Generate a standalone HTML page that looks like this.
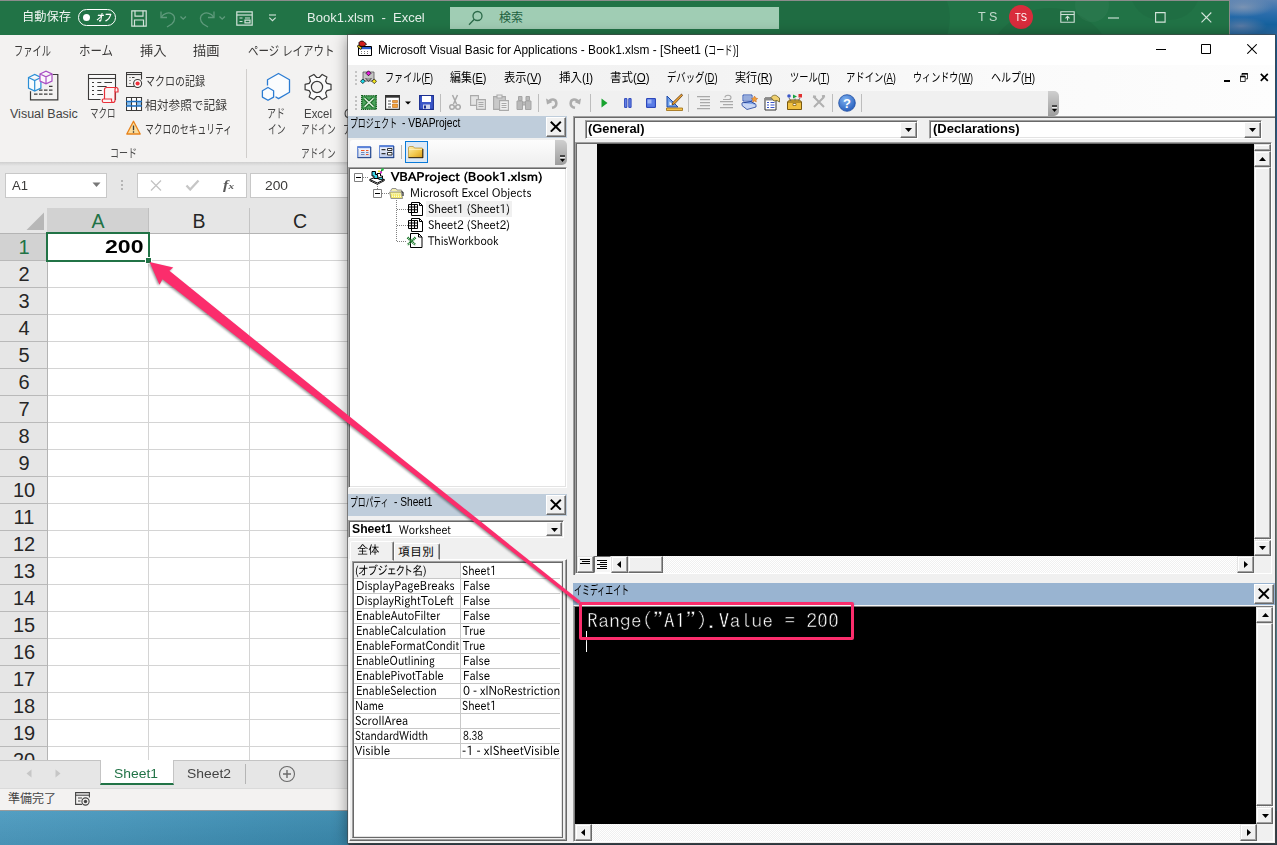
<!DOCTYPE html>
<html lang="ja">
<head>
<meta charset="utf-8">
<title>Excel VBA</title>
<style>
*{box-sizing:border-box;margin:0;padding:0}
html,body{width:1277px;height:845px;overflow:hidden}
body{position:relative;background:linear-gradient(180deg,#1a64a0 0,#2a6a9e 15%,#8f9690 35%,#bcad95 46%,#9fa79a 60%,#4f8fa8 80%,#3b5560 100%);font-family:"Liberation Sans","Noto Sans CJK JP",sans-serif;color:#222}
.abs{position:absolute}
.t{position:absolute;white-space:nowrap;line-height:1}
/* wallpaper */
#wpTop{left:1229px;top:0;width:48px;height:35px;background:radial-gradient(ellipse 26px 9px at 12px 26px,#5a7ba6 0,rgba(90,123,166,0) 100%),radial-gradient(ellipse 30px 10px at 14px 7px,#7a93b3 0,rgba(122,147,179,0) 100%),linear-gradient(180deg,#5b83b3 0,#2a6cab 40%,#15629f 70%,#2a6aa3 100%)}
#wpBot{left:0;top:811px;width:1277px;height:34px;background:linear-gradient(180deg,rgba(255,255,255,.04),rgba(0,0,0,.06)),linear-gradient(90deg,#4d9bc0 0,#4796bb 120px,#3f8fb4 250px,#3b8aae 348px,#3a4f5c 349px,#3a4a55 100%)}
/* excel */
#xl{left:0;top:0;width:1230px;height:811px;background:#fff;overflow:hidden;border-right:1px solid #8c8c8c;border-bottom:1px solid #9a9a9a}
#xlTitle{left:0;top:0;width:1229px;height:35px;background:#217346}
#xlTitle .t{color:#fff}
#xlTabs{left:0;top:35px;width:1229px;height:30px;background:#f3f2f1}
#xlRibbon{left:0;top:65px;width:1229px;height:97px;background:#f3f2f1}
#xlFx{left:0;top:162px;width:1229px;height:46px;background:#e6e6e6}
.rt{font-size:13px;color:#3b3a39;top:43px}
.rl{font-size:12px;color:#444}
.cell-h{position:absolute;font-size:18px;color:#262626;text-align:center;line-height:1}

/* vba */
#vba{left:0;top:0;width:0;height:0;font-family:"Liberation Sans","IPAPGothic","Noto Sans CJK JP",sans-serif}
.ui{font-family:"Liberation Sans","Noto Sans CJK JP",sans-serif}
.gt{font-family:"IPAPGothic","IPAGothic","Noto Sans CJK JP",sans-serif}
.sunk{position:absolute;border:1px solid;border-color:#a0a0a0 #fff #fff #a0a0a0;box-shadow:inset 1px 1px 0 #696969,inset -1px -1px 0 #e3e3e3}
.btn{position:absolute;background:#f0f0f0;border:1px solid;border-color:#fff #696969 #696969 #fff;box-shadow:inset -1px -1px 0 #a0a0a0,inset 1px 1px 0 #f0f0f0}
.sb{position:absolute;background:#f0f0f0;border:1px solid;border-color:#e3e3e3 #696969 #696969 #e3e3e3;box-shadow:inset -1px -1px 0 #a0a0a0,inset 1px 1px 0 #fff}
.track{position:absolute;background:#f8f8f8;background-image:repeating-conic-gradient(#fff 0 25%,#f0f0f0 0 50%);background-size:2px 2px}
.mn{color:#000}
u{text-decoration:underline;text-underline-offset:1px}
</style>
</head>
<body>
<div class="abs" id="wpTop"></div>
<div class="abs" id="wpBot"></div>

<!-- ================= EXCEL ================= -->
<div class="abs" id="xl">
  <div class="abs" id="xlTitle">
    <div class="abs" style="left:0;top:0;width:1229px;height:35px;overflow:hidden">
      <div class="abs" style="left:780px;top:-30px;width:170px;height:110px;border-radius:0 60px 80px 0;background:rgba(0,0,0,.055)"></div>
      <div class="abs" style="left:985px;top:8px;width:130px;height:90px;border-radius:65px 65px 0 0;background:rgba(0,0,0,.05)"></div>
      <div class="abs" style="left:1075px;top:-12px;width:34px;height:34px;border-radius:17px;background:rgba(255,255,255,.035)"></div>
      <div class="abs" style="left:1130px;top:-40px;width:70px;height:60px;border-radius:35px;background:rgba(0,0,0,.04)"></div>
    </div>
    <div class="t" style="left:22px;top:11.2px;font-size:12.5px;transform:scaleX(0.980);transform-origin:0 50%;color:#fff;opacity:.93">自動保存</div>
    <div class="abs" style="left:78px;top:9px;width:38px;height:17px;border:1.3px solid #fff;border-radius:9px"></div>
    <div class="abs" style="left:83px;top:13.500px;width:7px;height:7px;border-radius:4px;background:#fff"></div>
    <div class="t" style="left:96px;top:12.5px;font-size:10px;transform:scaleX(0.750);transform-origin:0 50%;color:#fff;font-style:italic;font-weight:bold">オフ</div>
    <svg class="abs" style="left:131px;top:10px" width="16" height="17" viewBox="0 0 16 17" fill="none" stroke="#d3e3da" stroke-width="1.2"><path d="M.8.800h14.400v15.400H.8z"/><path d="M4 .8v5.400h8V.8"/><path d="M3.500 16.200V10h9v6.200"/></svg>
    <svg class="abs" style="left:159px;top:9px" width="30" height="19" viewBox="0 0 30 19" fill="none" stroke="#5f9a7c" stroke-width="1.300"><path d="M2 2.500v6h6"/><path d="M2.300 8.300C4.500 4.300 9.500 2.800 13 5c3.600 2.300 3.300 6.800-.2 10L8 18"/><path d="M21.500 7.500l2.700 2.700 2.700-2.700"/></svg>
    <svg class="abs" style="left:198px;top:9px" width="30" height="19" viewBox="0 0 30 19" fill="none" stroke="#5f9a7c" stroke-width="1.300"><path d="M16 2.500v6h-6"/><path d="M15.700 8.300C13.500 4.300 8.500 2.800 5 5c-3.600 2.300-3.300 6.800.2 10L10 18"/><path d="M21.500 7.500l2.700 2.700 2.700-2.700"/></svg>
    <svg class="abs" style="left:236px;top:11px" width="17" height="15" viewBox="0 0 17 15" fill="none" stroke="#d3e3da" stroke-width="1.2"><path d="M.8.800h15.400v13.400H.8z"/><path d="M.8 4h15.400"/><path d="M3.500 7h3M9 7h5M3.500 10.500h3M9 9.200h5v2.600H9z"/></svg>
    <svg class="abs" style="left:267px;top:13px" width="11" height="9" viewBox="0 0 11 9" fill="none" stroke="#d3e3da" stroke-width="1.100"><path d="M2 2h7"/><path d="M2.300 4.700l3.200 3 3.200-3"/></svg>
    <div class="t" style="left:307px;top:11.0px;font-size:13px;color:#fff;opacity:.88">Book1.xlsm&nbsp; -&nbsp; Excel</div>
    <div class="abs" style="left:450px;top:7px;width:329px;height:22px;background:#a0cdb4"></div>
    <svg class="abs" style="left:468px;top:10px" width="16" height="16" viewBox="0 0 16 16" fill="none" stroke="#2b6a49" stroke-width="1.300"><circle cx="9.500" cy="6" r="4.500"/><path d="M6.300 9.300L1 14.800"/></svg>
    <div class="t" style="left:499px;top:11.5px;font-size:12px;color:#21613f">検索</div>
    <div class="t" style="left:978px;top:11.2px;font-size:12.5px;color:#fff;opacity:.72">T S</div>
    <div class="abs" style="left:1009px;top:5px;width:24px;height:24px;border-radius:12px;background:#d92c3c"></div>
    <div class="t" style="left:1015px;top:12.5px;font-size:10px;transform:scaleX(0.939);transform-origin:0 50%;color:#fff">TS</div>
    <svg class="abs" style="left:1060px;top:11px" width="15" height="12" viewBox="0 0 15 12" fill="none" stroke="#cfe0d7" stroke-width="1.100"><path d="M.8.800h13.400v10.400H.8z"/><path d="M.8 3.500h13.400"/><path d="M7.500 9.500V5.500M5.500 7.300l2-2 2 2"/></svg>
    <svg class="abs" style="left:1108px;top:17px" width="12" height="2" viewBox="0 0 12 2"><path d="M0 1h11" stroke="#d5e5dc" stroke-width="1.100"/></svg>
    <svg class="abs" style="left:1155px;top:12px" width="11" height="11" viewBox="0 0 11 11" fill="none" stroke="#d5e5dc" stroke-width="1.100"><path d="M.6.600h9.500v9.500H.6z"/></svg>
    <svg class="abs" style="left:1201px;top:12px" width="11" height="11" viewBox="0 0 11 11" fill="none" stroke="#d5e5dc" stroke-width="1.100"><path d="M.5.500l9.800 9.800M10.300.5L.5 10.300"/></svg>
  </div>
  <div class="abs" style="left:0;top:0;width:1230px;height:1px;background:#8c8c8c"></div>
  <div class="abs" id="xlTabs"></div>
  <div class="t" style="left:14px;top:43.5px;font-size:13px;transform:scaleX(0.711);transform-origin:0 50%;color:#3b3a39">ファイル</div>
  <div class="t" style="left:79px;top:43.5px;font-size:13px;transform:scaleX(0.880);transform-origin:0 50%;color:#3b3a39">ホーム</div>
  <div class="t" style="left:139.5px;top:43.5px;font-size:13px;transform:scaleX(1.019);transform-origin:0 50%;color:#3b3a39">挿入</div>
  <div class="t" style="left:192.5px;top:43.5px;font-size:13px;transform:scaleX(1.019);transform-origin:0 50%;color:#3b3a39">描画</div>
  <div class="t" style="left:247.5px;top:43.5px;font-size:13px;transform:scaleX(0.806);transform-origin:0 50%;color:#3b3a39">ページ レイアウト</div>
  <div class="abs" id="xlRibbon"></div>
  <!-- Visual Basic icon -->
  <svg class="abs" style="left:27px;top:70px" width="33" height="33" viewBox="0 0 33 33" fill="none" stroke-width="1.200">
    <path d="M25.500 4.500h5.300v25.300H3.500v-8.500" stroke="#3b3a39"/><path d="M22 16.300h5M12 20.200h15M7 24.100h20" stroke="#3b3a39" stroke-dasharray="3.500 1.500"/>
    <path d="M1.500 7.500l6.200-3 6.200 3v10.500l-6.200 3-6.200-3z M1.500 7.500l6.200 3 6.200-3M7.700 10.500v10.500" stroke="#2b8fd6" fill="#f8fbfe"/>
    <path d="M13 4l6-2.800 6 2.800v7l-6 2.800-6-2.800z M13 4l6 2.800 6-2.800M19 6.800v7" stroke="#a94fc4" fill="#fbf6fc"/>
  </svg>
  <div class="t" style="left:10px;top:108.3px;font-size:12.5px;color:#444">Visual Basic</div>
  <!-- Macro icon -->
  <svg class="abs" style="left:87px;top:73px" width="33" height="31" viewBox="0 0 33 31" fill="none" stroke-width="1.100">
    <path d="M1.500 1.500h27v25h-27z" stroke="#3b3a39" fill="#fafafa"/><path d="M1.500 5.500h27" stroke="#3b3a39"/>
    <path d="M5 9.500h2M10.300 9.500h4M17.400 9.500h7.600M5 13.500h2M10.300 13.500h9.300M5 17.500h2M10.300 17.500h4.400M5 21.500h2M10.300 21.500h5.700" stroke="#3b3a39"/>
    <path d="M14.500 30.300h-1v-5h4V16.500c0-1.200.8-2 2-2h10c1.300 0 2 .8 2 2v2.500h-3.500v8.500c0 1.500-1 2.800-2.500 2.800z" fill="#f3f2f1" stroke="none"/>
    <path d="M17.500 26V16.500c0-1.200.8-2 2-2h9.700c1.200 0 1.800.8 1.800 2v2.500h-3v8.300c0 1.300-1 2.200-2.200 2.200h-9c-1 0-1.500-.6-1.500-1.500v-1c0-.6.400-1 1-1h8.200v1.500c0 1.200.6 2 1.500 2" stroke="#e8303a" fill="#fbf4f4" stroke-width="1.200"/><path d="M28 19v-2.500c0-1.200.5-2 1.500-2" stroke="#e8303a" stroke-width="1.200"/>
  </svg>
  <div class="t" style="left:89.5px;top:108.3px;font-size:12.5px;transform:scaleX(0.680);transform-origin:0 50%;color:#444">マクロ</div>
  <!-- record macro -->
  <svg class="abs" style="left:126px;top:72px" width="17" height="16" viewBox="0 0 17 16" fill="none" stroke-width="1.100">
    <path d="M8.500 14.500h-8v-14h15v7" stroke="#3b3a39"/><path d="M.5 2.500h15" stroke="#3b3a39"/><path d="M3.500 5.500h1M6 5.500h2.500M3.500 8.500h1M3.500 11.500h1" stroke="#3b3a39"/>
    <circle cx="11.600" cy="11.500" r="4" fill="#fdfdfd" stroke="#3b3a39"/><circle cx="11.600" cy="11.500" r="2.100" fill="#ee2f3a"/>
  </svg>
  <div class="t" style="left:145px;top:75.8px;font-size:12.5px;transform:scaleX(0.800);transform-origin:0 50%;color:#3b3a39">マクロの記録</div>
  <!-- relative ref -->
  <svg class="abs" style="left:126px;top:97px" width="17" height="15" viewBox="0 0 17 15" fill="none" stroke-width="1.100">
    <path d="M.5.500h15v13h-15z" fill="#fff"/><rect x=".5" y="4.500" width="15" height="4.500" fill="#8fc3ef"/><rect x="6" y="5" width="4.500" height="3.500" fill="#fff"/>
    <path d="M.5.500h15v13h-15z M5.500.5v13M10.500.5v13" stroke="#3b3a39"/><path d="M0 4.500h16M0 9h16" stroke="#1e6fc0" stroke-width="1.300"/>
  </svg>
  <div class="t" style="left:145px;top:99.8px;font-size:12.5px;transform:scaleX(0.937);transform-origin:0 50%;color:#3b3a39">相対参照で記録</div>
  <!-- warning -->
  <svg class="abs" style="left:126px;top:120px" width="16" height="15" viewBox="0 0 16 15"><path d="M7.500 1.300l6.700 12.700H.8z" fill="#fbdc9c" stroke="#e8821a" stroke-width="1.300" stroke-linejoin="round"/><path d="M7.500 5.500v4.700M7.500 11.300v1.500" stroke="#3b3a39" stroke-width="1.300"/></svg>
  <div class="t" style="left:145px;top:124.2px;font-size:12.5px;transform:scaleX(0.700);transform-origin:0 50%;color:#3b3a39">マクロのセキュリティ</div>
  <div class="t" style="left:109.5px;top:148.3px;font-size:12px;transform:scaleX(0.750);transform-origin:0 50%;color:#4a4a4a">コード</div>
  <div class="abs" style="left:246px;top:69px;width:1px;height:89px;background:#d0cecc"></div>
  <!-- add-in hexagons -->
  <svg class="abs" style="left:260px;top:71px" width="32" height="32" viewBox="0 0 32 32" fill="none" stroke="#2b7cd3" stroke-width="1.300" stroke-linejoin="round">
    <path d="M7.500 14.500V8.800l11-6.300 11 6.300v12.500l-11 6.300-3-1.800" fill="#fafcfe"/>
    <path d="M8 16.500l5.600 3.200v6.400L8 29.300l-5.600-3.200v-6.400z" fill="#fafcfe"/>
  </svg>
  <div class="t" style="left:267px;top:108.3px;font-size:12.5px;transform:scaleX(0.720);transform-origin:0 50%;color:#444">アド</div>
  <div class="t" style="left:267.5px;top:124.2px;font-size:12.5px;transform:scaleX(0.700);transform-origin:0 50%;color:#444">イン</div>
  <!-- gear -->
  <svg class="abs" style="left:301px;top:71px" width="32" height="32" viewBox="0 0 32 32" fill="none" stroke="#3b3a39" stroke-width="1.200" stroke-linejoin="round">
    <g transform="rotate(90 16 16)"><path d="M13.300 2h5.400l.9 4.100 2.300 1.300 4-1.300 2.700 4.700-3.100 2.800v2.700l3.100 2.800-2.700 4.700-4-1.300-2.300 1.300-.9 4.100h-5.400l-.9-4.100-2.300-1.300-4 1.300-2.700-4.700 3.100-2.800v-2.700L3.400 10.800l2.700-4.700 4 1.300 2.300-1.300z" fill="#fbfbfb"/></g>
    <circle cx="16" cy="16" r="5.600" fill="#f3f2f1"/>
  </svg>
  <div class="t" style="left:304px;top:108.3px;font-size:12.5px;transform:scaleX(0.916);transform-origin:0 50%;color:#444">Excel</div>
  <div class="t" style="left:300.5px;top:124.2px;font-size:12.5px;transform:scaleX(0.690);transform-origin:0 50%;color:#444">アドイン</div>
  <div class="t" style="left:300.5px;top:148.3px;font-size:12px;transform:scaleX(0.719);transform-origin:0 50%;color:#4a4a4a">アドイン</div>
  <div class="t" style="left:344px;top:108.3px;font-size:12.5px;transform:scaleX(0.886);transform-origin:0 50%;color:#444">C</div>
  <div class="t" style="left:343px;top:124.2px;font-size:12.5px;transform:scaleX(0.719);transform-origin:0 50%;color:#444">ア</div>
  <div class="abs" style="left:0;top:162px;width:1229px;height:4px;background:linear-gradient(180deg,#d4d4d4,#e6e6e6)"></div>
  <div class="abs" id="xlFx"></div>
  <div class="abs" style="left:0;top:162px;width:1229px;height:4px;background:linear-gradient(180deg,#cfcfcf,#e6e6e6)"></div>
  <div class="abs" style="left:5px;top:173px;width:102px;height:25px;background:#fff;border:1px solid #c8c8c8"></div>
  <div class="t" style="left:12px;top:179.2px;font-size:13.5px;transform:scaleX(0.969);transform-origin:0 50%;color:#3b3a39">A1</div>
  <svg class="abs" style="left:92px;top:182px" width="9" height="6" viewBox="0 0 9 6"><path d="M.5.500h8L4.500 5z" fill="#777"/></svg>
  <div class="abs" style="left:121px;top:180px;width:2px;height:2px;background:#b5b5b5;box-shadow:0 4px 0 #b5b5b5,0 8px 0 #b5b5b5"></div>
  <div class="abs" style="left:137px;top:173px;width:110px;height:25px;background:#fff;border:1px solid #c8c8c8"></div>
  <svg class="abs" style="left:150px;top:180px" width="12" height="11" viewBox="0 0 12 11"><path d="M1 .5l10 10M11 .5l-10 10" stroke="#c3c3c3" stroke-width="1.300"/></svg>
  <svg class="abs" style="left:185px;top:179px" width="15" height="12" viewBox="0 0 15 12"><path d="M1.500 6.500l3.700 4L13.500 1.500" stroke="#c6c6c6" stroke-width="2.300" fill="none"/></svg>
  <div class="t" style="left:222.5px;top:178.3px;font-size:13px;transform:scaleX(1.244);transform-origin:0 50%;color:#5a5a5a;font-family:'Liberation Serif',serif;font-style:italic;font-weight:bold">f<span style="font-size:9px">x</span></div>
  <div class="abs" style="left:250px;top:173px;width:985px;height:25px;background:#fff;border:1px solid #c8c8c8"></div>
  <div class="t" style="left:265px;top:179.2px;font-size:13.5px;transform:scaleX(1.021);transform-origin:0 50%;color:#3b3a39">200</div>
  <!-- grid -->
  <div class="abs" style="left:0;top:208px;width:1229px;height:552px;background:#fff"></div>
  <div class="abs" style="left:47px;top:233px;width:1182px;height:527px;background-image:repeating-linear-gradient(90deg,#d4d4d4 0,#d4d4d4 1px,transparent 1px,transparent 101px),repeating-linear-gradient(180deg,#d4d4d4 0,#d4d4d4 1px,transparent 1px,transparent 27px)"></div>
  <div class="abs" style="left:0;top:208px;width:1229px;height:26px;background:#e6e6e6"></div>
  <div class="abs" style="left:47px;top:208px;width:102px;height:25px;background:#d2d2d2"></div>
  <div class="abs" style="left:148px;top:208px;width:1px;height:25px;background:#c0c0c0"></div>
  <div class="abs" style="left:249px;top:208px;width:1px;height:25px;background:#c4c4c4"></div>
  <div class="abs" style="left:0;top:233px;width:1229px;height:1px;background:#b4b4b4"></div>
  <svg class="abs" style="left:26px;top:212px" width="19" height="19" viewBox="0 0 19 19"><path d="M18 .5V18H.5z" fill="#b7b7b7"/></svg>
  <div class="abs" style="left:0;top:234px;width:47px;height:526px;background:#e6e6e6"></div>
  <div class="abs" style="left:0;top:234px;width:47px;height:26px;background:#d2d2d2"></div>
  <div class="abs" style="left:47px;top:233px;width:1px;height:527px;background:#b4b4b4"></div>
  <div class="abs" style="left:0;top:260px;width:47px;height:1px;background:#b9b9b9"></div>
  <div class="abs" style="left:0;top:287px;width:47px;height:1px;background:#b9b9b9"></div>
  <div class="abs" style="left:0;top:314px;width:47px;height:1px;background:#b9b9b9"></div>
  <div class="abs" style="left:0;top:341px;width:47px;height:1px;background:#b9b9b9"></div>
  <div class="abs" style="left:0;top:368px;width:47px;height:1px;background:#b9b9b9"></div>
  <div class="abs" style="left:0;top:395px;width:47px;height:1px;background:#b9b9b9"></div>
  <div class="abs" style="left:0;top:422px;width:47px;height:1px;background:#b9b9b9"></div>
  <div class="abs" style="left:0;top:449px;width:47px;height:1px;background:#b9b9b9"></div>
  <div class="abs" style="left:0;top:476px;width:47px;height:1px;background:#b9b9b9"></div>
  <div class="abs" style="left:0;top:503px;width:47px;height:1px;background:#b9b9b9"></div>
  <div class="abs" style="left:0;top:530px;width:47px;height:1px;background:#b9b9b9"></div>
  <div class="abs" style="left:0;top:557px;width:47px;height:1px;background:#b9b9b9"></div>
  <div class="abs" style="left:0;top:584px;width:47px;height:1px;background:#b9b9b9"></div>
  <div class="abs" style="left:0;top:611px;width:47px;height:1px;background:#b9b9b9"></div>
  <div class="abs" style="left:0;top:638px;width:47px;height:1px;background:#b9b9b9"></div>
  <div class="abs" style="left:0;top:665px;width:47px;height:1px;background:#b9b9b9"></div>
  <div class="abs" style="left:0;top:692px;width:47px;height:1px;background:#b9b9b9"></div>
  <div class="abs" style="left:0;top:719px;width:47px;height:1px;background:#b9b9b9"></div>
  <div class="abs" style="left:0;top:746px;width:47px;height:1px;background:#b9b9b9"></div>
  <div class="t" style="left:78px;top:211.700px;width:40px;text-align:center;font-size:19.500px;color:#217346">A</div>
  <div class="t" style="left:179px;top:211.700px;width:40px;text-align:center;font-size:19.500px;color:#262626">B</div>
  <div class="t" style="left:280px;top:211.700px;width:40px;text-align:center;font-size:19.500px;color:#262626">C</div>
  <div class="t" style="left:4px;top:237px;width:40px;text-align:center;font-size:20px;color:#217346">1</div>
  <div class="t" style="left:4px;top:264px;width:40px;text-align:center;font-size:20px;color:#262626">2</div>
  <div class="t" style="left:4px;top:291px;width:40px;text-align:center;font-size:20px;color:#262626">3</div>
  <div class="t" style="left:4px;top:318px;width:40px;text-align:center;font-size:20px;color:#262626">4</div>
  <div class="t" style="left:4px;top:345px;width:40px;text-align:center;font-size:20px;color:#262626">5</div>
  <div class="t" style="left:4px;top:372px;width:40px;text-align:center;font-size:20px;color:#262626">6</div>
  <div class="t" style="left:4px;top:399px;width:40px;text-align:center;font-size:20px;color:#262626">7</div>
  <div class="t" style="left:4px;top:426px;width:40px;text-align:center;font-size:20px;color:#262626">8</div>
  <div class="t" style="left:4px;top:453px;width:40px;text-align:center;font-size:20px;color:#262626">9</div>
  <div class="t" style="left:4px;top:480px;width:40px;text-align:center;font-size:20px;color:#262626">10</div>
  <div class="t" style="left:4px;top:507px;width:40px;text-align:center;font-size:20px;color:#262626">11</div>
  <div class="t" style="left:4px;top:534px;width:40px;text-align:center;font-size:20px;color:#262626">12</div>
  <div class="t" style="left:4px;top:561px;width:40px;text-align:center;font-size:20px;color:#262626">13</div>
  <div class="t" style="left:4px;top:588px;width:40px;text-align:center;font-size:20px;color:#262626">14</div>
  <div class="t" style="left:4px;top:615px;width:40px;text-align:center;font-size:20px;color:#262626">15</div>
  <div class="t" style="left:4px;top:642px;width:40px;text-align:center;font-size:20px;color:#262626">16</div>
  <div class="t" style="left:4px;top:669px;width:40px;text-align:center;font-size:20px;color:#262626">17</div>
  <div class="t" style="left:4px;top:696px;width:40px;text-align:center;font-size:20px;color:#262626">18</div>
  <div class="t" style="left:4px;top:723px;width:40px;text-align:center;font-size:20px;color:#262626">19</div>
  <div class="t" style="left:4px;top:750px;width:40px;text-align:center;font-size:20px;color:#262626">20</div>
  <div class="abs" style="left:46px;top:232px;width:104px;height:30px;border:2px solid #217346;background:#fff"></div>
  <div class="abs" style="left:145px;top:257px;width:7px;height:7px;background:#217346;border:1px solid #fff"></div>
  <div class="t" style="left:105px;top:238.0px;font-size:18px;transform:scaleX(1.281);transform-origin:0 50%;color:#000;font-weight:bold">200</div>
  <div class="abs" style="left:0;top:760px;width:1229px;height:28px;background:#e6e6e6;border-top:1px solid #c4c4c4"></div>
  <div class="abs" style="left:100px;top:760px;width:74px;height:25px;background:#fff;border-left:1px solid #c4c4c4;border-right:1px solid #c4c4c4;border-bottom:2px solid #217346"></div>
  <div class="t" style="left:114px;top:767.0px;font-size:13px;transform:scaleX(1.068);transform-origin:0 50%;color:#217346">Sheet1</div>
  <div class="t" style="left:187px;top:767.0px;font-size:13px;transform:scaleX(1.068);transform-origin:0 50%;color:#444">Sheet2</div>
  <div class="abs" style="left:245px;top:764px;width:1px;height:20px;background:#b5b5b5"></div>
  <svg class="abs" style="left:278px;top:765px" width="18" height="18" viewBox="0 0 18 18" fill="none" stroke="#6a6a6a" stroke-width="1.100"><circle cx="9" cy="9" r="7.500"/><path d="M9 5v8M5 9h8" stroke-width="1.400"/></svg>
  <svg class="abs" style="left:26px;top:769px" width="6" height="9" viewBox="0 0 6 9"><path d="M5.500.5v8L.5 4.500z" fill="#c6c6c6"/></svg>
  <svg class="abs" style="left:55px;top:769px" width="6" height="9" viewBox="0 0 6 9"><path d="M.5.500v8L5.500 4.500z" fill="#c6c6c6"/></svg>
  <div class="abs" style="left:0;top:788px;width:1229px;height:23px;background:#f3f2f1;border-top:1px solid #dadada"></div>
  <div class="t" style="left:8px;top:792.5px;font-size:12px;color:#444">準備完了</div>
  <svg class="abs" style="left:75px;top:792px" width="16" height="14" viewBox="0 0 16 14" fill="none" stroke="#444" stroke-width="1.100"><path d="M7 12.400H.6V.6h13.800v5"/><path d="M.6 3.200h13.800"/><path d="M3 6h4M3 9h2.500"/><circle cx="10.500" cy="9.500" r="3.600" fill="#f3f2f1"/><circle cx="10.500" cy="9.500" r="1.700" fill="#444" stroke="none"/></svg>
</div>

<!-- ================= VBA ================= -->
<div class="abs" id="vba">
  <div class="abs" style="left:348px;top:35px;width:927px;height:808px;background:#f0f0f0;box-shadow:0 0 0 1px rgba(70,70,70,.6),0 2px 14px rgba(0,0,0,.45)"></div>
  <div class="abs" style="left:348px;top:35px;width:927px;height:30px;background:#fff"></div>
  <div class="abs" style="left:348px;top:65px;width:927px;height:51px;background:linear-gradient(90deg,#f0f0f0 0,#f3f3f3 35%,#fafafa 70%,#fdfdfd 100%)"></div>
  <!-- title icon -->
  <svg class="abs" style="left:356px;top:40px" width="17" height="17" viewBox="0 0 17 17">
    <path d="M2.500 6.500h13v9h-13z" fill="#fff" stroke="#000" stroke-width="1"/><path d="M3 7h12v2.200H3z" fill="#2a5fd0"/>
    <path d="M5 11.500h1M8 11.500h1M11 11.500h1M5 13.500h1M8 13.500h1M11 13.500h1" stroke="#777" stroke-width="1"/>
    <path d="M3 2.500c1.500-2 4.500-2 6 .3l1.500 1.200-1.700 1.800C7 6.800 4 6.500 3 5z" fill="#d21f1f" stroke="#000" stroke-width=".8"/>
    <path d="M2 5l4 2.500-1 2-3.500-2.500z" fill="#f0d020" stroke="#000" stroke-width=".7"/>
  </svg>
  <div class="t" style="left:377.5px;top:43.8px;font-size:12.5px;transform:scaleX(0.949);transform-origin:0 50%;color:#000;font-family:'Liberation Sans',sans-serif">Microsoft Visual Basic for Applications - Book1.xlsm - &#91;Sheet1 (</div>
  <div class="t" style="left:708px;top:43.8px;font-size:12.5px;transform:scaleX(0.653);transform-origin:0 50%;color:#000;font-family:'Noto Sans CJK JP',sans-serif">コード</div>
  <div class="t" style="left:733px;top:43.8px;font-size:12.5px;transform:scaleX(0.720);transform-origin:0 50%;color:#000;font-family:'Liberation Sans',sans-serif">)&#93;</div>
  <div class="abs" style="left:1156px;top:49px;width:10px;height:1px;background:#000"></div>
  <svg class="abs" style="left:1201px;top:44px" width="10" height="10" viewBox="0 0 10 10" fill="none" stroke="#000" stroke-width="1"><path d="M.5.500h9v9h-9z"/></svg>
  <svg class="abs" style="left:1247px;top:44px" width="10" height="10" viewBox="0 0 10 10" fill="none" stroke="#000" stroke-width="1.050"><path d="M.3.300l9.400 9.400M9.700.3L.3 9.700"/></svg>

  <!-- menu grip + icon -->
  <div class="abs" style="left:355px;top:71px;width:2px;height:2px;background:#c4c4c4;box-shadow:0 4px 0 #c4c4c4,0 8px 0 #c4c4c4,0 12px 0 #c4c4c4"></div>
  <svg class="abs" style="left:360px;top:70px" width="17" height="15" viewBox="0 0 17 15">
    <path d="M3 2h11v9H3z" fill="#c4c4c4" stroke="#555" stroke-width=".8"/><path d="M5.500 8l3 3.500 3-3.500" fill="#9a9a9a" stroke="#333" stroke-width=".8"/>
    <path d="M8.500.8l2.500 2.500-2.500 2.500L6 3.300z" fill="#e81adf" stroke="#000" stroke-width=".7"/>
    <path d="M2.800 9l2.300 2.300-2.300 2.300L.5 11.300z" fill="#18d8e8" stroke="#000" stroke-width=".7"/>
    <path d="M14.200 9l2.300 2.300-2.300 2.300-2.300-2.300z" fill="#f5e61a" stroke="#000" stroke-width=".7"/>
  </svg>
  <div class="t" style="left:385px;top:71.5px;font-size:12px;transform:scaleX(0.758);transform-origin:0 50%;color:#000;font-family:'Liberation Sans','Noto Sans CJK JP',sans-serif">ファイル(<u>F</u>)</div>
  <div class="t" style="left:449.5px;top:71.5px;font-size:12px;transform:scaleX(0.912);transform-origin:0 50%;color:#000;font-family:'Liberation Sans','Noto Sans CJK JP',sans-serif">編集(<u>E</u>)</div>
  <div class="t" style="left:503.5px;top:71.5px;font-size:12px;transform:scaleX(0.937);transform-origin:0 50%;color:#000;font-family:'Liberation Sans','Noto Sans CJK JP',sans-serif">表示(<u>V</u>)</div>
  <div class="t" style="left:558.5px;top:71.5px;font-size:12px;transform:scaleX(0.962);transform-origin:0 50%;color:#000;font-family:'Liberation Sans','Noto Sans CJK JP',sans-serif">挿入(<u>I</u>)</div>
  <div class="t" style="left:609.5px;top:71.5px;font-size:12px;transform:scaleX(0.955);transform-origin:0 50%;color:#000;font-family:'Liberation Sans','Noto Sans CJK JP',sans-serif">書式(<u>O</u>)</div>
  <div class="t" style="left:666.5px;top:71.5px;font-size:12px;transform:scaleX(0.781);transform-origin:0 50%;color:#000;font-family:'Liberation Sans','Noto Sans CJK JP',sans-serif">デバッグ(<u>D</u>)</div>
  <div class="t" style="left:734.5px;top:71.5px;font-size:12px;transform:scaleX(0.922);transform-origin:0 50%;color:#000;font-family:'Liberation Sans','Noto Sans CJK JP',sans-serif">実行(<u>R</u>)</div>
  <div class="t" style="left:789.5px;top:71.5px;font-size:12px;transform:scaleX(0.769);transform-origin:0 50%;color:#000;font-family:'Liberation Sans','Noto Sans CJK JP',sans-serif">ツール(<u>T</u>)</div>
  <div class="t" style="left:846px;top:71.5px;font-size:12px;transform:scaleX(0.781);transform-origin:0 50%;color:#000;font-family:'Liberation Sans','Noto Sans CJK JP',sans-serif">アドイン(<u>A</u>)</div>
  <div class="t" style="left:913px;top:71.5px;font-size:12px;transform:scaleX(0.756);transform-origin:0 50%;color:#000;font-family:'Liberation Sans','Noto Sans CJK JP',sans-serif">ウィンドウ(<u>W</u>)</div>
  <div class="t" style="left:991px;top:71.5px;font-size:12px;transform:scaleX(0.835);transform-origin:0 50%;color:#000;font-family:'Liberation Sans','Noto Sans CJK JP',sans-serif">ヘルプ(<u>H</u>)</div>
  <div class="abs" style="left:1224px;top:80px;width:6px;height:2px;background:#000"></div>
  <svg class="abs" style="left:1240px;top:73px" width="8" height="9" viewBox="0 0 10 10" preserveAspectRatio="none" fill="none" stroke="#000"><path d="M2.500 2.500v-2h7v6h-2" stroke-width="1"/><path d="M2.500 1h7" stroke-width="1.600"/><path d="M.5 3.500h6v6h-6z" stroke-width="1"/><path d="M.5 4h6" stroke-width="1.600"/></svg>
  <svg class="abs" style="left:1260px;top:73px" width="9" height="9" viewBox="0 0 9 9"><path d="M.8.800l7 7M7.800.8l-7 7" stroke="#000" stroke-width="1.700"/></svg>

  <!-- toolbar -->
  <div class="abs" style="left:352px;top:91px;width:703px;height:25px;background:#f0f0f0;border-radius:3px 0 0 3px"></div>
  <div class="abs" style="left:1048px;top:91px;width:11px;height:25px;background:linear-gradient(180deg,#cfcfcf,#9d9d9d);border-radius:0 5px 5px 0"></div>
  <svg class="abs" style="left:1050.500px;top:105px" width="7" height="8" viewBox="0 0 7 8"><path d="M1 1h5" stroke="#000" stroke-width="1.200"/><path d="M1 4h5L3.500 7z" fill="#000"/><path d="M1 2.500h5" stroke="#fff" stroke-width=".8"/></svg>
  <div class="abs" style="left:355px;top:96px;width:2px;height:2px;background:#c0c0c0;box-shadow:0 4px 0 #c0c0c0,0 8px 0 #c0c0c0,0 12px 0 #c0c0c0"></div>
  <!-- excel icon -->
  <svg class="abs" style="left:361px;top:95px" width="16" height="15" viewBox="0 0 16 15"><path d="M.8.800h14.400v13.400H.8z" fill="#4ba45c" stroke="#14601f" stroke-width="1.600" stroke-dasharray="1.200 .7"/><path d="M3.500 3.300l9 8.600M12.500 3.300l-9 8.600" stroke="#14601f" stroke-width="3.400"/><path d="M3.500 3.300l9 8.600M12.500 3.300l-9 8.600" stroke="#d8efd9" stroke-width="1.500"/></svg>
  <!-- userform -->
  <svg class="abs" style="left:385px;top:95px" width="15" height="15" viewBox="0 0 15 15"><path d="M.6.600h13.800v13.800H.6z" fill="#fff" stroke="#333" stroke-width="1.100"/><path d="M.6 1.500h13.800" stroke="#333" stroke-width="2.400"/><path d="M3 6h3M3 9h3M3 12h3" stroke="#555" stroke-width="1.200"/><path d="M7.500 5.500h5v2h-5zM7.500 9h5v3.500h-5z" fill="#f3a13a" stroke="#b8651a" stroke-width=".6"/></svg>
  <svg class="abs" style="left:405px;top:101px" width="6" height="4" viewBox="0 0 6 4"><path d="M0 .5h6L3 3.500z" fill="#000"/></svg>
  <!-- save -->
  <svg class="abs" style="left:419px;top:95px" width="15" height="15" viewBox="0 0 15 15"><path d="M.6.600h13.800v13.800H.6z" fill="#3a56c8" stroke="#1c2f8f" stroke-width="1.100"/><path d="M3 1h9v6H3z" fill="#fff"/><path d="M4 9.500h7V14H4z" fill="#cdd3ea"/><path d="M5 10.500h2v3H5z" fill="#1c2f8f"/></svg>
  <div class="abs" style="left:440px;top:94px;width:1px;height:18px;background:#bdbdbd"></div>
  <!-- cut -->
  <svg class="abs" style="left:449px;top:94px" width="12" height="17" viewBox="0 0 12 17" fill="none" stroke="#a9a9a9" stroke-width="1.500"><path d="M3.500 1l4 9M8.500 1l-4 9"/><circle cx="3" cy="13" r="2.300"/><circle cx="9" cy="13" r="2.300"/></svg>
  <!-- copy -->
  <svg class="abs" style="left:470px;top:95px" width="16" height="15" viewBox="0 0 16 15" fill="#e4e4e4" stroke="#a9a9a9" stroke-width="1.100"><path d="M.6.600h7.800v9.800H.6z"/><path d="M6.600 4.600h8.800v9.800H6.600z"/><path d="M8.500 7.500h5M8.500 9.500h5M8.500 11.500h5" stroke-width="1"/></svg>
  <!-- paste -->
  <svg class="abs" style="left:493px;top:94px" width="16" height="17" viewBox="0 0 16 17" fill="#dcdcdc" stroke="#a9a9a9" stroke-width="1.100"><path d="M.6 2.600h11.800v12.800H.6z" fill="#c9c9c9"/><path d="M4 1h5v3H4z" fill="#e8e8e8"/><path d="M6.600 6.600h8.800v9.800H6.600z" fill="#efefef"/><path d="M8.500 9.500h5M8.500 11.500h5M8.500 13.500h5" stroke-width="1"/></svg>
  <!-- find -->
  <svg class="abs" style="left:516px;top:95px" width="16" height="15" viewBox="0 0 16 15" fill="#b9b9b9" stroke="#a5a5a5" stroke-width="1"><path d="M2.500 1.500h3.500v4h-3.500zM10 1.500h3.500v4H10z"/><path d="M1 6h5.500v8.500H1zM9.500 6H15v8.500H9.500z"/><path d="M6.500 7h3v3h-3z"/></svg>
  <div class="abs" style="left:538px;top:94px;width:1px;height:18px;background:#bdbdbd"></div>
  <!-- undo redo -->
  <svg class="abs" style="left:546px;top:96px" width="12" height="13" viewBox="0 0 12 13" fill="none" stroke="#adadad" stroke-width="2.600"><path d="M3 6c1.500-3.500 7-3.300 7.300 1 .2 2.500-1.500 4.300-4.300 4.800"/><path d="M0 2.500l1 6 5.500-2.500z" fill="#adadad" stroke="none"/></svg>
  <svg class="abs" style="left:569px;top:96px" width="12" height="13" viewBox="0 0 12 13" fill="none" stroke="#adadad" stroke-width="2.600"><path d="M9 6C7.500 2.500 2 2.700 1.700 7c-.2 2.500 1.500 4.300 4.300 4.800"/><path d="M12 2.500l-1 6L5.500 6z" fill="#adadad" stroke="none"/></svg>
  <div class="abs" style="left:590px;top:94px;width:1px;height:18px;background:#bdbdbd"></div>
  <!-- run pause stop -->
  <svg class="abs" style="left:601px;top:98px" width="7" height="10" viewBox="0 0 7 10"><path d="M.5.500v9L6.500 5z" fill="#17a32e"/></svg>
  <svg class="abs" style="left:624px;top:98px" width="8" height="10" viewBox="0 0 8 10" fill="#6a86e8" stroke="#1f3bb5" stroke-width=".9"><path d="M.6.600h2.300v8.800H.6zM4.800.6h2.300v8.800H4.800z"/></svg>
  <svg class="abs" style="left:646px;top:98px" width="10" height="10" viewBox="0 0 10 10"><path d="M.6.600h8.800v8.800H.6z" fill="#5a7de6" stroke="#1f3bb5" stroke-width="1"/><path d="M1.500 1.500h4v4h-4z" fill="#9db4f5"/></svg>
  <!-- design mode -->
  <svg class="abs" style="left:666px;top:93px" width="17" height="18" viewBox="0 0 17 18"><path d="M1 3v11h11z" fill="#6fa0e8" stroke="#1d49a8" stroke-width="1"/><path d="M3.500 8.500v3.500h3.500z" fill="#fff"/><path d="M.5 15h16v2.500H.5z" fill="#f3c24a" stroke="#9a6a10" stroke-width=".8"/><path d="M15.500 1l1 1.500-8 8.500-2.500 1 .8-2.500z" fill="#f0a030" stroke="#5a3a10" stroke-width=".8"/></svg>
  <div class="abs" style="left:688px;top:94px;width:1px;height:18px;background:#bdbdbd"></div>
  <svg class="abs" style="left:697px;top:96px" width="13" height="14" viewBox="0 0 13 14" stroke="#a9a9a9" stroke-width="1.100"><path d="M0 .6h13M3 3.600h10M3 6.600h10M3 9.600h10M0 12.600h13"/></svg>
  <svg class="abs" style="left:720px;top:94px" width="13" height="16" viewBox="0 0 13 16" fill="none" stroke="#a9a9a9" stroke-width="1.100"><path d="M5 3.500c0-3 6-3 6 0 0 1.500-1 2-2 2H3"/><path d="M0 7.600h13M3 10.600h10M0 13.600h13"/></svg>
  <!-- project explorer -->
  <svg class="abs" style="left:741px;top:93px" width="17" height="18" viewBox="0 0 17 18"><path d="M2 2h9v6H2z" fill="#dfe9fb" stroke="#2a50b0" stroke-width="1"/><path d="M3 4h7M3 6h7" stroke="#2a50b0" stroke-width=".8"/><path d="M1 10l9-1.500 5 3-9 2.500z" fill="#7fa3e8" stroke="#1d3f99" stroke-width="1"/><path d="M1 10v2.500l5 4 9-2.500v-2.500" fill="#c7d6f5" stroke="#1d3f99" stroke-width=".8"/><path d="M13.500 3l1.200 2 2 .5-1.700 1.500.3 2-1.800-1-1.800 1 .3-2L10.500 5.500l2-.5z" fill="#f3a13a" stroke="#c0601a" stroke-width=".5"/></svg>
  <!-- properties -->
  <svg class="abs" style="left:764px;top:94px" width="16" height="17" viewBox="0 0 16 17"><path d="M1 4h11v12H1z" fill="#fff" stroke="#333" stroke-width="1"/><path d="M1 4h11v2.500H1z" fill="#8a8a8a"/><path d="M3 8.500h2M3 11h2M3 13.500h2M6.500 8.500h4M6.500 11h4M6.500 13.500h4" stroke="#3a56c8" stroke-width="1.100"/><path d="M7 3.500c2-3 5-3 7-.5l1.500 1v4L13 6.500 10 7z" fill="#f0d070" stroke="#6a5a20" stroke-width=".8"/></svg>
  <!-- toolbox -->
  <svg class="abs" style="left:786px;top:93px" width="17" height="18" viewBox="0 0 17 18"><path d="M1.500 9l2-2h10l2 2v7.500h-14z" fill="#f0c040" stroke="#7a5a10" stroke-width="1"/><path d="M1.500 9h14" stroke="#7a5a10"/><path d="M7 10.500h3v2H7z" fill="#fff" stroke="#7a5a10" stroke-width=".7"/><circle cx="3" cy="3" r="1.800" fill="#3a56c8"/><path d="M7 1.500l4 2-4 2z" fill="#18a040"/><path d="M12.500 1h3.500v3.500h-3.500z" fill="#e03030"/><path d="M3 5l2 3M9 5.500v2M14 5l-1.500 2.500" stroke="#555" stroke-width=".8"/></svg>
  <!-- tools disabled -->
  <svg class="abs" style="left:812px;top:95px" width="14" height="14" viewBox="0 0 14 14" fill="none" stroke="#b0b0b0" stroke-width="2"><path d="M2 2l10 10M12 2L2 12"/><path d="M1 1.500l3 .5M10 1.500l3-.5" stroke-width="2.500"/></svg>
  <div class="abs" style="left:832px;top:94px;width:1px;height:18px;background:#bdbdbd"></div>
  <!-- help -->
  <svg class="abs" style="left:838px;top:94px" width="18" height="18" viewBox="0 0 18 18"><defs><radialGradient id="hg" cx=".4" cy=".3" r=".8"><stop offset="0" stop-color="#7db1f0"/><stop offset="1" stop-color="#1d55b8"/></radialGradient></defs><circle cx="9" cy="9" r="8.300" fill="url(#hg)" stroke="#1a4aa0" stroke-width=".8"/><text x="9" y="13.500" font-size="13" font-weight="bold" text-anchor="middle" fill="#fff" font-family="Liberation Sans, sans-serif">?</text></svg>
  <div class="abs" style="left:861px;top:94px;width:1px;height:18px;background:#bdbdbd"></div>
  

  <!-- project panel -->
  <div class="abs" style="left:348px;top:116px;width:219px;height:22px;background:#bfcddb"></div>
  <div class="t" style="left:349.5px;top:117.0px;font-size:12px;transform:scaleX(0.653);transform-origin:0 50%;color:#000;font-family:'Noto Sans CJK JP',sans-serif">プロジェクト</div>
  <div class="t" style="left:402px;top:117.0px;font-size:12px;transform:scaleX(0.851);transform-origin:0 50%;color:#000;font-family:'Liberation Sans',sans-serif">- VBAProject</div>
  <div class="btn" style="left:546px;top:117px;width:20px;height:20px"></div>
  <svg class="abs" style="left:550px;top:121px" width="12" height="11" viewBox="0 0 12 11"><path d="M.8.800l10 9.800M10.800.8L.8 10.600" stroke="#000" stroke-width="2"/></svg>
  <div class="abs" style="left:350px;top:140px;width:206px;height:25px;background:linear-gradient(180deg,#fdfdfd,#efefef);border-radius:3px 0 0 3px"></div>
  <div class="abs" style="left:555px;top:140px;width:12px;height:25px;background:linear-gradient(180deg,#cfcfcf,#9d9d9d);border-radius:0 5px 5px 0"></div>
  <svg class="abs" style="left:558.500px;top:155px" width="7" height="8" viewBox="0 0 7 8"><path d="M1 1h5" stroke="#000" stroke-width="1.200"/><path d="M1 4h5L3.500 7z" fill="#000"/><path d="M1 2.500h5" stroke="#fff" stroke-width=".8"/></svg>
  <!-- view code / view object / toggle folders -->
  <svg class="abs" style="left:357px;top:146px" width="15" height="13" viewBox="0 0 15 13"><defs><linearGradient id="vg1" x1="0" y1="0" x2="0" y2="1"><stop offset="0" stop-color="#fff"/><stop offset="1" stop-color="#c9d6f0"/></linearGradient></defs><path d="M.5.500h13v11H.5z" fill="url(#vg1)" stroke="#6d8fd6" stroke-width="1"/><path d="M.5 1.300h13" stroke="#5b82d8" stroke-width="1.800"/><path d="M.5 11.700h13.500M13.800 1v11" stroke="#1f3f80" stroke-width="1"/><path d="M1.500 3v8" stroke="#aab8d8" stroke-width="1"/><path d="M4 4.500h3.500M9 4.500h2.500M9 8.500h2.500" stroke="#f05a28" stroke-width="1.200"/><path d="M4 6.500h3.500M9 6.500h2.500M4 8.500h3.500" stroke="#6d86b8" stroke-width="1.100"/></svg>
  <svg class="abs" style="left:379px;top:145px" width="16" height="14" viewBox="0 0 16 14"><defs><linearGradient id="vg2" x1="0" y1="0" x2="0" y2="1"><stop offset="0" stop-color="#fff"/><stop offset="1" stop-color="#b9c8ea"/></linearGradient></defs><path d="M.5.500h14v12H.5z" fill="url(#vg2)" stroke="#6d8fd6" stroke-width="1"/><path d="M.5 1.300h14" stroke="#5b82d8" stroke-width="1.800"/><path d="M.5 12.700h14.500M14.800 1v12" stroke="#1f3f80" stroke-width="1"/><path d="M2.500 4.700h4M2.500 8.700h4" stroke="#333" stroke-width="1.200"/><path d="M8.500 3.500h4.500v2H8.500zM8.500 7.500h4.500v2.500H8.500z" fill="#fff" stroke="#333" stroke-width="1"/></svg>
  <div class="abs" style="left:401px;top:145px;width:1px;height:14px;background:#b5b5b5"></div>
  <div class="abs" style="left:405px;top:141px;width:23px;height:22px;background:#dce9f6;border:1.500px solid #0a7ad8"></div>
  <svg class="abs" style="left:408px;top:146px" width="16" height="13" viewBox="0 0 16 13"><defs><linearGradient id="fg1" x1="0" y1="0" x2=".9" y2="1"><stop offset="0" stop-color="#fdf0b0"/><stop offset=".6" stop-color="#f3c84a"/><stop offset="1" stop-color="#d9a020"/></linearGradient></defs><path d="M.5 1.800c0-.8.500-1.300 1.300-1.300h3.500l1.200 1.500h7.300c.6 0 1 .4 1 1v8.500H.5z" fill="url(#fg1)" stroke="#b08a30" stroke-width=".7"/><path d="M.5 11.700h14.500M14.800 3v9" stroke="#2a2010" stroke-width="1"/><path d="M1 3.300h13" stroke="#fff6d0" stroke-width=".8"/></svg>
  <!-- tree -->
  <div class="sunk" style="left:348px;top:167px;width:219px;height:321px;background:#fff"></div>
  <svg class="abs" style="left:348px;top:165px" width="100" height="85" viewBox="348 165 100 85" fill="none">
    <path d="M363 177.500h6M377.500 184v5M382 193.500h7M396.500 200v42M397 209.500h11M397 225.500h11M397 241.500h10" stroke="#808080" stroke-width="1" stroke-dasharray="1 1"/>
    <path d="M354.500 173.500h8v8h-8z" fill="#fff" stroke="#808080"/><path d="M356 177.500h5" stroke="#000"/>
    <path d="M373.500 189.500h8v8h-8z" fill="#fff" stroke="#808080"/><path d="M375 193.500h5" stroke="#000"/>
  </svg>
  <!-- project icon -->
  <svg class="abs" style="left:369px;top:168px" width="17" height="17" viewBox="0 0 17 17"><path d="M.8 11.500l6-2.500 8.500 2.500-7 3.500z" fill="#fff" stroke="#000" stroke-width="1"/><path d="M.8 11.500v1.200l7.500 3.600 7-3.600v-1.200" fill="none" stroke="#000" stroke-width=".9"/><path d="M3 3.500h3.500v3H9v4H5V8H3z" fill="#3fd8e8" stroke="#000" stroke-width="1"/><path d="M8 5.500h3.500v2.500h2V11H9.500z" fill="#fff" stroke="#000" stroke-width="1"/><path d="M10 9.500h3.500v2H10z" fill="#3fd8e8" stroke="#000" stroke-width=".7"/><path d="M10.500 6l2.500-4" stroke="#000" stroke-width="1"/><circle cx="13.500" cy="1.600" r="1.300" fill="#1fc040"/><circle cx="12" cy="4.500" r="1.100" fill="#e828d8"/><circle cx="10" cy="3.300" r="1" fill="#f0e020"/></svg>
  <div class="t" style="left:390.5px;top:169.6px;font-size:12px;transform:scaleX(1.092);transform-origin:0 50%;color:#000;font-weight:bold;font-family:'IPAPGothic','Noto Sans CJK JP',sans-serif">VBAProject (Book1.xlsm)</div>
  <!-- folder icon -->
  <svg class="abs" style="left:389px;top:187px" width="15" height="13" viewBox="0 0 15 13"><path d="M1.500 4l1.500-2.500h4l1 1.500h4.500l.5 2" fill="#f4eeb0" stroke="#8a8a8a" stroke-width=".9"/><path d="M.6 5h11.500l1.500 6.500H2z" fill="#f3e96a" stroke="#8a8a8a" stroke-width=".9"/><path d="M12.500 4.500l1.500 1v3.500" stroke="#222" stroke-width="1.200" fill="none"/><path d="M2.500 6.500h9M3 8h9M3 9.500h9.500" stroke="#fff" stroke-width=".8" stroke-dasharray="1 1"/></svg>
  <div class="t" style="left:409.5px;top:185.6px;font-size:12px;transform:scaleX(0.918);transform-origin:0 50%;color:#000;font-family:'IPAPGothic','Noto Sans CJK JP',sans-serif">Microsoft Excel Objects</div>
  <div class="abs" style="left:426px;top:201px;width:86px;height:16px;background:#f0f0f0"></div>
  <svg class="abs" style="left:408px;top:202px" width="16" height="14" viewBox="0 0 16 14"><path d="M3.500.5h8l3 3v10h-11z" fill="#fff" stroke="#000" stroke-width="1"/><path d="M11.500.5v3h3" fill="none" stroke="#000" stroke-width="1"/><path d="M.5 2.500h9v8h-9z" fill="#fff" stroke="#000"/><path d="M.5 5h9M.5 7.700h9M3.500 2.500v8M6.500 2.500v8" fill="none" stroke="#000" stroke-width="1.100"/></svg>
  <div class="t" style="left:427.5px;top:201.6px;font-size:12px;transform:scaleX(0.905);transform-origin:0 50%;color:#000;font-family:'IPAPGothic','Noto Sans CJK JP',sans-serif">Sheet1 (Sheet1)</div>
  <svg class="abs" style="left:408px;top:218px" width="16" height="14" viewBox="0 0 16 14"><path d="M3.500.5h8l3 3v10h-11z" fill="#fff" stroke="#000" stroke-width="1"/><path d="M11.500.5v3h3" fill="none" stroke="#000" stroke-width="1"/><path d="M.5 2.500h9v8h-9z" fill="#fff" stroke="#000"/><path d="M.5 5h9M.5 7.700h9M3.500 2.500v8M6.500 2.500v8" fill="none" stroke="#000" stroke-width="1.100"/></svg>
  <div class="t" style="left:427.5px;top:217.6px;font-size:12px;transform:scaleX(0.905);transform-origin:0 50%;color:#000;font-family:'IPAPGothic','Noto Sans CJK JP',sans-serif">Sheet2 (Sheet2)</div>
  <svg class="abs" style="left:406px;top:233px" width="17" height="15" viewBox="0 0 17 15"><path d="M4.500.5h8l3.500 3.500v10.500H4.500z" fill="#fff" stroke="#000" stroke-width="1"/><path d="M12.500.5v3.500h3.500" fill="none" stroke="#000" stroke-width="1"/><path d="M1.500 4.500l8 7.500M9.500 4.500l-8 7.500" stroke="#1f7a2e" stroke-width="2.400" stroke-dasharray="1.200 .6"/></svg>
  <div class="t" style="left:427.5px;top:233.6px;font-size:12px;transform:scaleX(0.876);transform-origin:0 50%;color:#000;font-family:'IPAPGothic','Noto Sans CJK JP',sans-serif">ThisWorkbook</div>

  <!-- properties panel -->
  <div class="abs" style="left:348px;top:494px;width:219px;height:22px;background:#bfcddb"></div>
  <div class="t" style="left:349.5px;top:495.5px;font-size:12px;transform:scaleX(0.649);transform-origin:0 50%;color:#000;font-family:'Noto Sans CJK JP',sans-serif">プロパティ</div>
  <div class="t" style="left:393.5px;top:495.5px;font-size:12px;transform:scaleX(0.848);transform-origin:0 50%;color:#000;font-family:'Liberation Sans',sans-serif">- Sheet1</div>
  <div class="btn" style="left:546px;top:495px;width:20px;height:20px"></div>
  <svg class="abs" style="left:550px;top:499px" width="12" height="11" viewBox="0 0 12 11"><path d="M.8.800l10 9.800M10.800.8L.8 10.600" stroke="#000" stroke-width="2"/></svg>
  <div class="sunk" style="left:348px;top:520px;width:216px;height:18px;background:#fff"></div>
  <div class="t" style="left:352px;top:523.0px;font-size:12px;transform:scaleX(1.016);transform-origin:0 50%;color:#000;font-weight:bold;font-family:'Liberation Sans',sans-serif">Sheet1</div>
  <div class="t" style="left:398.5px;top:523.0px;font-size:12px;transform:scaleX(0.871);transform-origin:0 50%;color:#000;font-family:'IPAPGothic','Noto Sans CJK JP',sans-serif">Worksheet</div>
  <div class="btn" style="left:546px;top:522px;width:16px;height:14px"></div>
  <svg class="abs" style="left:551px;top:528px" width="7" height="4" viewBox="0 0 7 4"><path d="M0 0h7L3.500 4z" fill="#000"/></svg>
  <div class="abs" style="left:349px;top:559px;width:218px;height:282px;border:1px solid;border-color:#fff #696969 #696969 #fff;box-shadow:inset -1px -1px 0 #a0a0a0"></div>
  <!-- tabs -->
  <div class="abs" style="left:394px;top:543px;width:46px;height:17px;background:#f0f0f0;border:1px solid;border-color:#fff #696969 transparent #fff;box-shadow:inset -1px 0 0 #a0a0a0;border-radius:2px 2px 0 0"></div>
  <div class="abs" style="left:350px;top:541px;width:44px;height:20px;background:#f0f0f0;border:1px solid;border-color:#fff #696969 transparent #fff;box-shadow:inset -1px 0 0 #a0a0a0;border-radius:2px 2px 0 0"></div>
  <div class="t" style="left:356.5px;top:542.6px;font-size:12px;transform:scaleX(0.938);transform-origin:0 50%;color:#000;font-family:'IPAPGothic','Noto Sans CJK JP',sans-serif">全体</div>
  <div class="t" style="left:398px;top:544.5px;font-size:12px;color:#000;font-family:'IPAPGothic','Noto Sans CJK JP',sans-serif">項目別</div>
  <div class="sunk" style="left:352px;top:561px;width:211px;height:277px;background:#fff;border-color:#a0a0a0 #696969 #696969 #a0a0a0"></div>
  <div class="abs" style="left:354px;top:563px;width:106px;height:15px;background:#f0f0f0"></div>
  <div class="abs" style="left:354px;top:564px;width:206px;height:195px;background-image:linear-gradient(180deg,transparent 14px,#c8c8c8 14px);background-size:100% 15px"></div>
  <div class="abs" style="left:460px;top:563px;width:1px;height:195px;background:#c8c8c8"></div>
  <div class="t" style="left:354.8px;top:565.0px;font-size:12.5px;transform:scaleX(0.866);transform-origin:0 50%;color:#000;font-family:'IPAPGothic','Noto Sans CJK JP',sans-serif">(オブジェクト名)</div>
  <div class="t" style="left:462.3px;top:565.0px;font-size:12.5px;transform:scaleX(0.840);transform-origin:0 50%;color:#000;font-family:'IPAPGothic','Noto Sans CJK JP',sans-serif">Sheet1</div>
  <div class="t" style="left:355.8px;top:580.0px;font-size:12.5px;transform:scaleX(0.893);transform-origin:0 50%;color:#000;font-family:'IPAPGothic','Noto Sans CJK JP',sans-serif">DisplayPageBreaks</div>
  <div class="t" style="left:462.8px;top:580.0px;font-size:12.5px;transform:scaleX(0.898);transform-origin:0 50%;color:#000;font-family:'IPAPGothic','Noto Sans CJK JP',sans-serif">False</div>
  <div class="t" style="left:355.8px;top:595.0px;font-size:12.5px;transform:scaleX(0.888);transform-origin:0 50%;color:#000;font-family:'IPAPGothic','Noto Sans CJK JP',sans-serif">DisplayRightToLeft</div>
  <div class="t" style="left:462.8px;top:595.0px;font-size:12.5px;transform:scaleX(0.898);transform-origin:0 50%;color:#000;font-family:'IPAPGothic','Noto Sans CJK JP',sans-serif">False</div>
  <div class="t" style="left:355.8px;top:610.0px;font-size:12.5px;transform:scaleX(0.863);transform-origin:0 50%;color:#000;font-family:'IPAPGothic','Noto Sans CJK JP',sans-serif">EnableAutoFilter</div>
  <div class="t" style="left:462.8px;top:610.0px;font-size:12.5px;transform:scaleX(0.898);transform-origin:0 50%;color:#000;font-family:'IPAPGothic','Noto Sans CJK JP',sans-serif">False</div>
  <div class="t" style="left:355.8px;top:625.0px;font-size:12.5px;transform:scaleX(0.844);transform-origin:0 50%;color:#000;font-family:'IPAPGothic','Noto Sans CJK JP',sans-serif">EnableCalculation</div>
  <div class="t" style="left:462.8px;top:625.0px;font-size:12.5px;transform:scaleX(0.829);transform-origin:0 50%;color:#000;font-family:'IPAPGothic','Noto Sans CJK JP',sans-serif">True</div>
  <div class="t" style="left:355.8px;top:640.0px;font-size:12.5px;transform:scaleX(0.851);transform-origin:0 50%;color:#000;font-family:'IPAPGothic','Noto Sans CJK JP',sans-serif">EnableFormatCondit</div>
  <div class="t" style="left:462.8px;top:640.0px;font-size:12.5px;transform:scaleX(0.829);transform-origin:0 50%;color:#000;font-family:'IPAPGothic','Noto Sans CJK JP',sans-serif">True</div>
  <div class="t" style="left:355.8px;top:655.0px;font-size:12.5px;transform:scaleX(0.836);transform-origin:0 50%;color:#000;font-family:'IPAPGothic','Noto Sans CJK JP',sans-serif">EnableOutlining</div>
  <div class="t" style="left:462.8px;top:655.0px;font-size:12.5px;transform:scaleX(0.898);transform-origin:0 50%;color:#000;font-family:'IPAPGothic','Noto Sans CJK JP',sans-serif">False</div>
  <div class="t" style="left:355.8px;top:670.0px;font-size:12.5px;transform:scaleX(0.861);transform-origin:0 50%;color:#000;font-family:'IPAPGothic','Noto Sans CJK JP',sans-serif">EnablePivotTable</div>
  <div class="t" style="left:462.8px;top:670.0px;font-size:12.5px;transform:scaleX(0.898);transform-origin:0 50%;color:#000;font-family:'IPAPGothic','Noto Sans CJK JP',sans-serif">False</div>
  <div class="t" style="left:355.8px;top:685.0px;font-size:12.5px;transform:scaleX(0.852);transform-origin:0 50%;color:#000;font-family:'IPAPGothic','Noto Sans CJK JP',sans-serif">EnableSelection</div>
  <div class="t" style="left:462.8px;top:685.0px;font-size:12.5px;transform:scaleX(0.895);transform-origin:0 50%;color:#000;font-family:'IPAPGothic','Noto Sans CJK JP',sans-serif">0 - xlNoRestriction</div>
  <div class="t" style="left:355.3px;top:700.0px;font-size:12.5px;transform:scaleX(0.835);transform-origin:0 50%;color:#000;font-family:'IPAPGothic','Noto Sans CJK JP',sans-serif">Name</div>
  <div class="t" style="left:462.3px;top:700.0px;font-size:12.5px;transform:scaleX(0.840);transform-origin:0 50%;color:#000;font-family:'IPAPGothic','Noto Sans CJK JP',sans-serif">Sheet1</div>
  <div class="t" style="left:355.3px;top:715.0px;font-size:12.5px;transform:scaleX(0.892);transform-origin:0 50%;color:#000;font-family:'IPAPGothic','Noto Sans CJK JP',sans-serif">ScrollArea</div>
  <div class="t" style="left:355.3px;top:730.0px;font-size:12.5px;transform:scaleX(0.833);transform-origin:0 50%;color:#000;font-family:'IPAPGothic','Noto Sans CJK JP',sans-serif">StandardWidth</div>
  <div class="t" style="left:462.8px;top:730.0px;font-size:12.5px;transform:scaleX(0.750);transform-origin:0 50%;color:#000;font-family:'IPAPGothic','Noto Sans CJK JP',sans-serif">8.38</div>
  <div class="t" style="left:355.3px;top:745.0px;font-size:12.5px;transform:scaleX(0.908);transform-origin:0 50%;color:#000;font-family:'IPAPGothic','Noto Sans CJK JP',sans-serif">Visible</div>
  <div class="t" style="left:462.3px;top:745.0px;font-size:12.5px;transform:scaleX(0.928);transform-origin:0 50%;color:#000;font-family:'IPAPGothic','Noto Sans CJK JP',sans-serif">-1 - xlSheetVisible</div>

  <!-- code window -->
  <div class="abs" style="left:573px;top:116px;width:702px;height:459px;background:#f0f0f0;border-left:1px solid #a0a0a0;border-top:1px solid #a0a0a0;box-shadow:inset 1px 1px 0 #696969"></div>
  <div class="sunk" style="left:585px;top:120px;width:333px;height:19px;background:#fff"></div>
  <div class="t" style="left:588px;top:123.0px;font-size:12px;transform:scaleX(1.072);transform-origin:0 50%;color:#000;font-weight:bold;font-family:'Liberation Sans',sans-serif">(General)</div>
  <div class="btn" style="left:900px;top:122px;width:17px;height:16px"></div>
  <svg class="abs" style="left:905px;top:128px" width="7" height="4" viewBox="0 0 7 4"><path d="M0 0h7L3.5 4z" fill="#000"/></svg>
  <div class="sunk" style="left:929px;top:120px;width:333px;height:19px;background:#fff"></div>
  <div class="t" style="left:932.5px;top:123.0px;font-size:12px;transform:scaleX(1.081);transform-origin:0 50%;color:#000;font-weight:bold;font-family:'Liberation Sans',sans-serif">(Declarations)</div>
  <div class="btn" style="left:1244px;top:122px;width:17px;height:16px"></div>
  <svg class="abs" style="left:1249px;top:128px" width="7" height="4" viewBox="0 0 7 4"><path d="M0 0h7L3.5 4z" fill="#000"/></svg>
  <div class="abs" style="left:575px;top:142px;width:697px;height:432px;border:1px solid;border-color:#a0a0a0 #fff #fff #a0a0a0;box-shadow:inset 1px 1px 0 #696969"></div>
  <div class="abs" style="left:577px;top:144px;width:20px;height:412px;background:#f0f0f0"></div>
  <div class="abs" style="left:597px;top:144px;width:657px;height:412px;background:#000"></div>
  <!-- vscroll -->
  <div class="track" style="left:1254px;top:144px;width:17px;height:412px"></div>
  <div class="sb" style="left:1254px;top:144px;width:17px;height:7px"></div>
  <div class="sb" style="left:1254px;top:151px;width:17px;height:16px"></div>
  <svg class="abs" style="left:1259px;top:157px" width="7" height="4" viewBox="0 0 7 4"><path d="M0 4h7L3.5 0z" fill="#000"/></svg>
  <div class="sb" style="left:1254px;top:167px;width:17px;height:372px"></div>
  <div class="sb" style="left:1254px;top:540px;width:17px;height:16px"></div>
  <svg class="abs" style="left:1259px;top:546px" width="7" height="4" viewBox="0 0 7 4"><path d="M0 0h7L3.5 4z" fill="#000"/></svg>
  <!-- hscroll -->
  <div class="track" style="left:577px;top:556px;width:677px;height:17px"></div>
  <div class="abs" style="left:1254px;top:556px;width:17px;height:17px;background:#f0f0f0"></div>
  <div class="sb" style="left:577px;top:556px;width:17px;height:17px"></div>
  <svg class="abs" style="left:580px;top:559px" width="10" height="6" viewBox="0 0 10 6"><path d="M0 .5h10M2 2.500h8M0 4.500h10" stroke="#000" stroke-width="1"/></svg>
  <div class="abs" style="left:594px;top:556px;width:17px;height:17px;background:#f6f6f6;border:1px solid;border-color:#696969 #fff #fff #696969"></div>
  <svg class="abs" style="left:597px;top:560px" width="10" height="9" viewBox="0 0 10 9"><path d="M0 .5h10M3 2.500h7M0 4.500h10M3 6.500h7M0 8.500h10" stroke="#000" stroke-width="1"/></svg>
  <div class="sb" style="left:611px;top:556px;width:17px;height:17px"></div>
  <svg class="abs" style="left:617px;top:561px" width="4" height="7" viewBox="0 0 4 7"><path d="M4 0v7L0 3.5z" fill="#000"/></svg>
  <div class="sb" style="left:628px;top:556px;width:35px;height:17px"></div>
  <div class="sb" style="left:1237px;top:556px;width:17px;height:17px"></div>
  <svg class="abs" style="left:1244px;top:561px" width="4" height="7" viewBox="0 0 4 7"><path d="M0 0v7L4 3.5z" fill="#000"/></svg>

  <!-- immediate -->
  <div class="abs" style="left:573px;top:583px;width:702px;height:22px;background:#99b4d1"></div>
  <div class="t" style="left:573.5px;top:584.5px;font-size:12.5px;transform:scaleX(0.635);transform-origin:0 50%;color:#000;font-family:'Liberation Sans','Noto Sans CJK JP',sans-serif">イミディエイト</div>
  <div class="btn" style="left:1254px;top:584px;width:20px;height:20px"></div>
  <svg class="abs" style="left:1258px;top:588px" width="12" height="11" viewBox="0 0 12 11"><path d="M.8.800l10 9.800M10.800.8L.8 10.600" stroke="#000" stroke-width="2"/></svg>
  <div class="abs" style="left:573px;top:605px;width:701px;height:237px;border:1px solid;border-color:#f4f4f4 #fff #fff #a0a0a0;box-shadow:inset 1px 1px 0 #7a7a7a"></div>
  <div class="abs" style="left:575px;top:607px;width:681px;height:217px;background:#000"></div>
  <div class="track" style="left:1256px;top:607px;width:17px;height:217px"></div>
  <div class="sb" style="left:1256px;top:607px;width:17px;height:16px"></div>
  <svg class="abs" style="left:1261.5px;top:613px" width="7" height="4" viewBox="0 0 7 4"><path d="M0 4h7L3.5 0z" fill="#000"/></svg>
  <div class="sb" style="left:1256px;top:623px;width:17px;height:183px"></div>
  <div class="sb" style="left:1256px;top:807px;width:17px;height:17px"></div>
  <svg class="abs" style="left:1261.5px;top:814px" width="7" height="4" viewBox="0 0 7 4"><path d="M0 0h7L3.5 4z" fill="#000"/></svg>
  <div class="track" style="left:575px;top:824px;width:682px;height:17px"></div>
  <div class="abs" style="left:1256px;top:824px;width:17px;height:17px;background:#f0f0f0"></div>
  <div class="sb" style="left:575px;top:824px;width:17px;height:17px"></div>
  <svg class="abs" style="left:581px;top:829px" width="4" height="7" viewBox="0 0 4 7"><path d="M4 0v7L0 3.5z" fill="#000"/></svg>
  <div class="sb" style="left:1240px;top:824px;width:17px;height:17px"></div>
  <svg class="abs" style="left:1247px;top:829px" width="4" height="7" viewBox="0 0 4 7"><path d="M0 0v7L4 3.5z" fill="#000"/></svg>
  <div class="t" style="left:586.5px;top:610.2px;font-size:20.5px;transform:scaleX(1.069);transform-origin:0 50%;color:#fff;-webkit-text-stroke:.5px #000;font-family:'IPAGothic','Noto Sans CJK JP',monospace">Range(&quot;A1&quot;).Value = 200</div>
  <div class="abs" style="left:586px;top:631px;width:1px;height:21px;background:#fff"></div>
  <div class="abs" style="left:579px;top:602px;width:275px;height:38px;border:3px solid #fb2d6c;border-radius:2px;box-shadow:0 1px 2px rgba(0,0,0,.35)"></div>

</div>
<svg class="abs" style="left:0;top:0;filter:drop-shadow(-.5px 1.500px 1.200px rgba(0,0,0,.42))" width="1277" height="845" viewBox="0 0 1277 845"><path d="M149.5 262.0 L173.3 267.4 L169.4 270.7 L282.0 362.1 L402.0 458.7 L477.0 518.6 L580.6 601.2 L578.4 603.8 L474.3 521.9 L398.8 462.7 L277.3 368.0 L162.5 279.3 L159.5 284.8z" fill="#fb2d6c"/></svg>

</body>
</html>
